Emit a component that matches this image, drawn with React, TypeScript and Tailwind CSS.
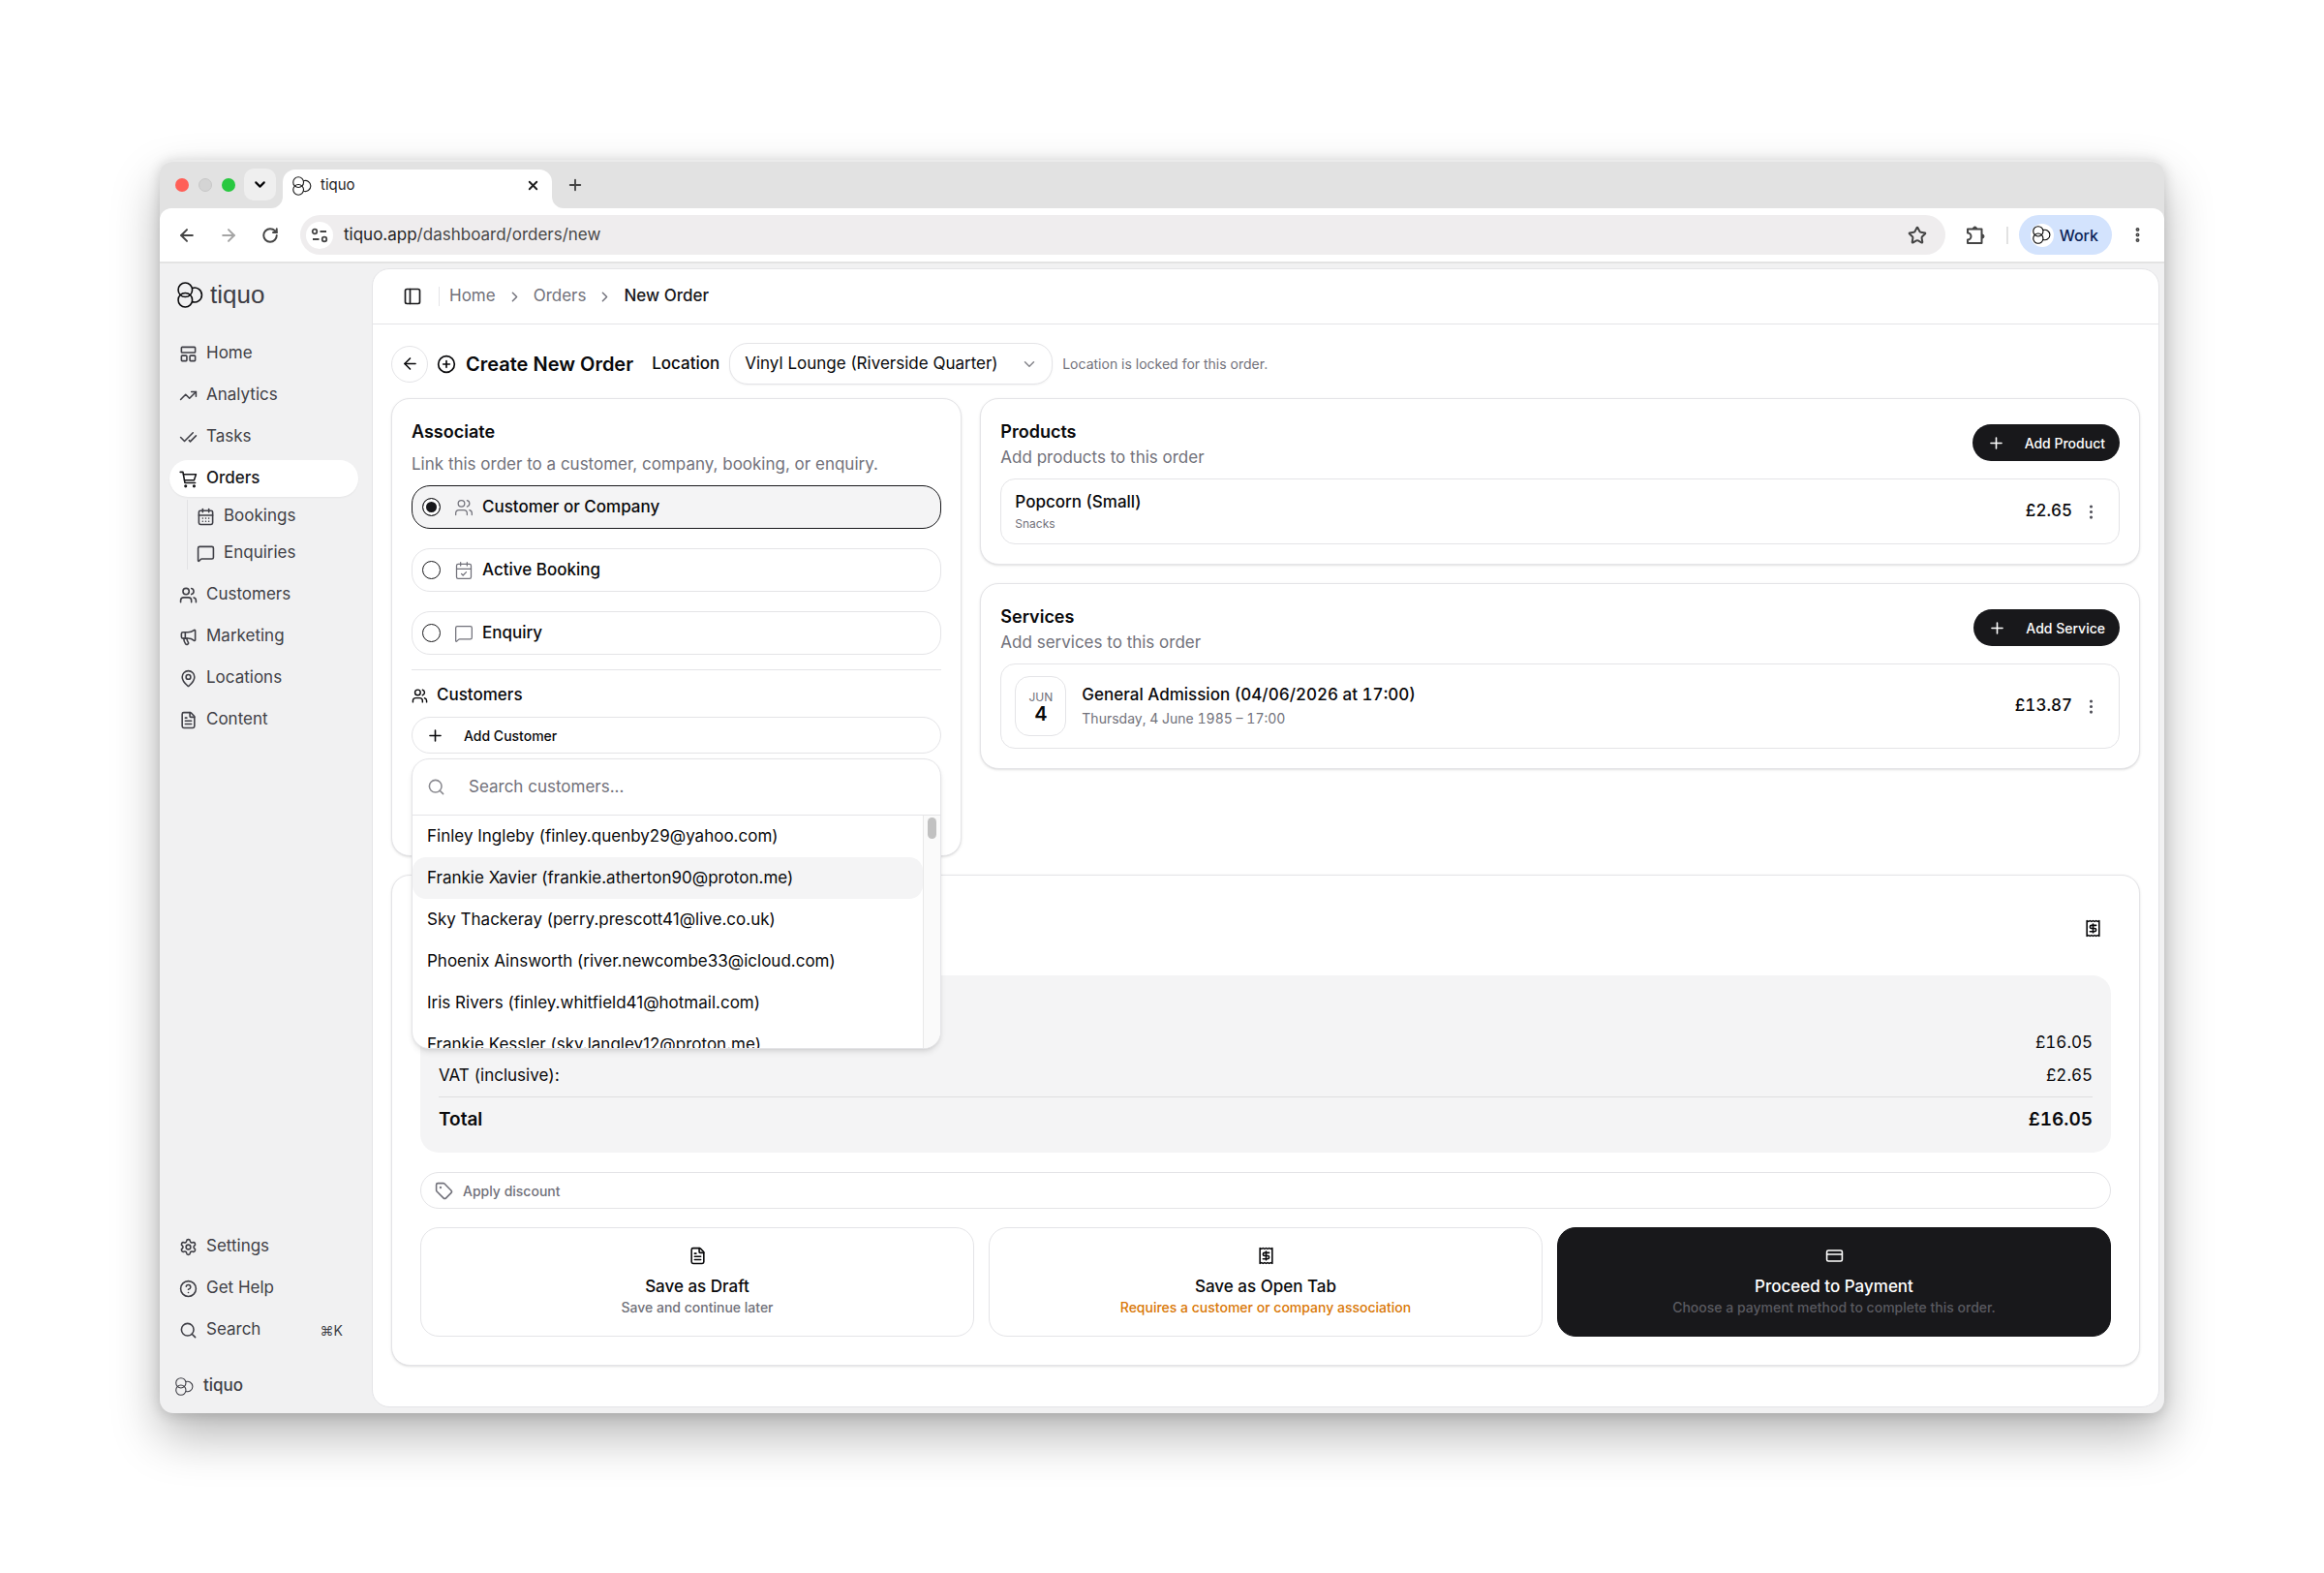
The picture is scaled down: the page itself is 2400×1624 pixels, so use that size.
import type { ComponentType, ReactNode } from "react";
import {
  ArrowLeft,
  ArrowRight,
  CalendarCheck,
  CalendarDays,
  CheckCheck,
  ChevronDown,
  ChevronRight,
  CircleHelp,
  CirclePlus,
  CreditCard,
  EllipsisVertical,
  FileText,
  LayoutPanelTop,
  MapPin,
  Megaphone,
  MessageSquare,
  PanelLeft,
  Plus,
  Receipt,
  RotateCw,
  Search,
  Settings,
  Star,
  Tag,
  TrendingUp,
  Users,
  X,
  type LucideIcon,
} from "lucide-react";

type NavIcon = ComponentType<{ size?: number }>;

const MAIN_NAV: { label: string; icon: NavIcon }[] = [
  { label: "Home", icon: LayoutPanelTop },
  { label: "Analytics", icon: TrendingUp },
  { label: "Tasks", icon: CheckCheck },
];

const SECOND_NAV: { label: string; icon: NavIcon }[] = [
  { label: "Customers", icon: Users },
  { label: "Marketing", icon: Megaphone },
  { label: "Locations", icon: MapPin },
  { label: "Content", icon: FileText },
];

const ASSOCIATIONS: { label: string; icon: LucideIcon }[] = [
  { label: "Customer or Company", icon: Users },
  { label: "Active Booking", icon: CalendarCheck },
  { label: "Enquiry", icon: MessageSquare },
];

const CUSTOMERS = [
  "Finley Ingleby (finley.quenby29@yahoo.com)",
  "Frankie Xavier (frankie.atherton90@proton.me)",
  "Sky Thackeray (perry.prescott41@live.co.uk)",
  "Phoenix Ainsworth (river.newcombe33@icloud.com)",
  "Iris Rivers (finley.whitfield41@hotmail.com)",
  "Frankie Kessler (sky.langley12@proton.me)",
];

function TiquoMark({ size = 26 }: { size?: number }) {
  return (
    <svg width={size} height={size} viewBox="0 0 26 26" fill="none" stroke="currentColor" strokeWidth="1.5" className="shrink-0">
      <circle cx="8" cy="8" r="7" />
      <circle cx="8" cy="18" r="7" />
      <path d="M14.780 6.260A7.200 7.200 0 1 1 14.780 19.740" />
    </svg>
  );
}

function CartIcon({ size = 19 }: { size?: number }) {
  return (
    <svg width={size} height={size} viewBox="0 0 24 24" fill="none" stroke="currentColor" strokeWidth="2" strokeLinecap="round" strokeLinejoin="round">
      <path d="M1.500 3H5l2.500 14h13.500" />
      <path d="M5.700 6H22l-2.500 7.500H7" />
      <circle cx="8.500" cy="21.300" r="1" />
      <circle cx="19.500" cy="21.300" r="1" />
    </svg>
  );
}

function Puzzle() {
  return (
    <svg width="22" height="22" viewBox="0 0 22 22" fill="none" stroke="currentColor" strokeWidth="2">
      <path d="M3 4.500h14.500V19H3v-3.500a3.400 3.400 0 0 0 0-7z" strokeLinejoin="round" />
      <path d="M8.500 4a2 2 0 0 1 4 0zM18 10a2 2 0 0 1 0 4z" fill="currentColor" strokeWidth="1" />
    </svg>
  );
}

function SiteControls() {
  return (
    <svg width="18" height="16" viewBox="0 0 18 16" fill="none" stroke="currentColor" strokeWidth="1.8">
      <circle cx="4" cy="4" r="2.300" />
      <path d="M9.500 4H16M2 12h6.500" />
      <circle cx="14" cy="12" r="2.300" />
    </svg>
  );
}

function TabStrip() {
  return (
    <div className="flex h-[48px] items-end bg-[#e2e2e2] pl-[16px]">
      <div className="flex h-[48px] items-center gap-[10px]">
        <span className="size-[14px] rounded-full bg-[#ff5f57]" />
        <span className="size-[14px] rounded-full border border-[#c8c8c8] bg-[#d4d4d4]" />
        <span className="size-[14px] rounded-full bg-[#28c840]" />
      </div>
      <button type="button" aria-label="Search tabs" className="mb-[8px] ml-[9px] flex size-[33px] items-center justify-center rounded-[10px] bg-[#efefef]">
        <ChevronDown size={17} strokeWidth={3} />
      </button>
      <div className="relative ml-[7px] flex h-[40px] w-[278px] items-center rounded-t-[13px] bg-white pr-[12px] pb-[7px] pl-[10px] text-[15px] text-[#1f1f1f]">
        <TiquoMark size={20} />
        <span className="ml-[9px] flex-1">tiquo</span>
        <button type="button" aria-label="Close tab">
          <X size={15} strokeWidth={3} />
        </button>
        <svg width="12" height="12" className="absolute bottom-0 -left-[12px]" fill="white">
          <path d="M12 0v12H0A12 12 0 0 0 12 0z" />
        </svg>
        <svg width="12" height="12" className="absolute -right-[12px] bottom-0" fill="white">
          <path d="M0 0v12h12A12 12 0 0 1 0 0z" />
        </svg>
      </div>
      <button type="button" aria-label="New tab" className="mb-[15px] ml-[15px] text-[#454545]">
        <Plus size={18} strokeWidth={2.5} />
      </button>
    </div>
  );
}

function Toolbar() {
  return (
    <div className="bg-[#e2e2e2]">
      <div className="flex h-[57px] items-center rounded-t-[12px] border-b-2 border-[#e3e3e3] bg-white px-[18px] text-[#454545]">
        <button type="button" aria-label="Back">
          <ArrowLeft size={20} strokeWidth={2.4} />
        </button>
        <button type="button" aria-label="Forward" className="ml-[23px] text-[#a5a5a5]">
          <ArrowRight size={20} strokeWidth={2.4} />
        </button>
        <button type="button" aria-label="Reload" className="ml-[24px]">
          <RotateCw size={18} strokeWidth={2.6} />
        </button>
        <div className="ml-[22px] flex h-[41px] flex-1 items-center rounded-full bg-[#efedee] pr-[19px] pl-[6px]">
          <span className="flex size-[28px] items-center justify-center rounded-full bg-white">
            <SiteControls />
          </span>
          <p className="ml-[11px] flex-1 text-[17px] text-[#474747]">
            <span className="text-[#1f1f1f]">tiquo.app</span>/dashboard/orders/new
          </p>
          <Star size={20} strokeWidth={2.4} />
        </div>
        <div className="ml-[20px] flex items-center">
          <Puzzle />
          <span className="ml-[21px] h-[18px] w-[2px] bg-[#e2e2e2]" />
          <button type="button" className="ml-[11px] flex h-[41px] items-center gap-[6px] rounded-full bg-[#d3e3fd] pr-[14px] pl-[12px] text-[16px] font-medium text-[#0b1f57]">
            <span className="flex size-[24px] items-center justify-center rounded-full bg-white text-black">
              <TiquoMark size={19} />
            </span>
            Work
          </button>
          <button type="button" aria-label="Menu" className="ml-[17px]">
            <EllipsisVertical size={19} strokeWidth={3} />
          </button>
        </div>
      </div>
    </div>
  );
}

function NavItem({ label, icon: Icon, active, hint }: { label: string; icon: NavIcon; active?: boolean; hint?: string }) {
  return (
    <a
      href="#"
      className={`flex h-[38px] items-center gap-[9px] rounded-full px-[10px] ${
        active ? "bg-white font-medium text-[#18181b] shadow-xs" : "text-[#3f3f46]"
      }`}
    >
      <Icon size={19} />
      {label}
      {hint && <kbd className="mr-[6px] ml-auto font-[Inter,sans-serif] text-[14px]">{hint}</kbd>}
    </a>
  );
}

function SubItem({ label, icon: Icon }: { label: string; icon: NavIcon }) {
  return (
    <a href="#" className="flex h-[34px] items-center gap-[9px] pl-[9px] text-[#3f3f46]">
      <Icon size={19} />
      {label}
    </a>
  );
}

function Sidebar() {
  return (
    <aside className="flex w-[219px] shrink-0 flex-col pr-[14px] pb-[11px] pl-[10px] text-[17px]">
      <div className="flex h-[64px] items-center gap-[7px] pl-[8px]">
        <TiquoMark size={27} />
        <span className="font-['Liberation_Sans',sans-serif] text-[26px] text-[#3f3f46]">tiquo</span>
      </div>
      <nav className="mt-[10px] flex flex-col gap-[5px]">
        {MAIN_NAV.map((n) => (
          <NavItem key={n.label} {...n} />
        ))}
        <NavItem label="Orders" icon={CartIcon} active />
        <div className="-mt-[2px] mb-[2px] ml-[18px] flex flex-col gap-[4px] border-l border-[#e2e2e4]">
          <SubItem label="Bookings" icon={CalendarDays} />
          <SubItem label="Enquiries" icon={MessageSquare} />
        </div>
        {SECOND_NAV.map((n) => (
          <NavItem key={n.label} {...n} />
        ))}
      </nav>
      <div className="mt-auto flex flex-col gap-[5px]">
        <NavItem label="Settings" icon={Settings} />
        <NavItem label="Get Help" icon={CircleHelp} />
        <NavItem label="Search" icon={Search} hint="⌘K" />
      </div>
      <a href="#" className="mt-[22px] flex h-[34px] items-center gap-[10px] pl-[6px] font-medium text-[#3f3f46]">
        <TiquoMark size={19} />
        tiquo
      </a>
    </aside>
  );
}

function Card({ title, description, action, className = "", children }: { title: string; description: string; action?: ReactNode; className?: string; children: ReactNode }) {
  return (
    <section className={`rounded-[19px] border border-[#e4e4e7] bg-white px-[20px] pt-[21px] shadow-sm ${className}`}>
      <div className="flex items-start justify-between">
        <div>
          <h2 className="text-[18px] leading-[26px] font-semibold">{title}</h2>
          <p className="text-[17px] leading-[27px] text-[#71717a]">{description}</p>
        </div>
        {action}
      </div>
      {children}
    </section>
  );
}

function AddButton({ label }: { label: string }) {
  return (
    <button type="button" className="mt-[5px] flex h-[38px] items-center gap-[20px] rounded-full bg-[#18181b] pr-[15px] pl-[15px] text-[14px] font-medium text-white">
      <Plus size={19} />
      {label}
    </button>
  );
}

function RowPrice({ price, item }: { price: string; item: string }) {
  return (
    <div className="ml-auto flex items-center gap-[10px] pr-[19px]">
      <span className="text-[17px] font-medium tabular-nums">{price}</span>
      <button type="button" aria-label={`Options for ${item}`} className="text-[#52525b]">
        <EllipsisVertical size={19} />
      </button>
    </div>
  );
}

function CustomerPicker() {
  return (
    <div className="absolute top-full right-0 left-0 z-10 mt-[5px] overflow-hidden rounded-[18px] border border-[#e4e4e7] bg-white shadow-md">
      <label className="flex h-[58px] items-center gap-[24px] border-b border-[#e4e4e7] pl-[15px]">
        <Search size={19} className="text-[#8a8a90]" />
        <input type="text" aria-label="Search customers" placeholder="Search customers..." className="flex-1 text-[17px] outline-none placeholder:text-[#71717a]" />
      </label>
      <div className="flex h-[240px]">
        <ul className="flex-1 overflow-hidden">
          {CUSTOMERS.map((c, i) => (
            <li key={c}>
              <button type="button" className={`flex h-[43px] w-full items-center rounded-[14px] px-[15px] text-[17px] ${i === 1 ? "bg-[#f4f4f5]" : ""}`}>
                {c}
              </button>
            </li>
          ))}
        </ul>
        <div className="flex w-[18px] justify-center border-l border-[#e8e8e8] bg-[#fafafa] pt-[2px]">
          <span className="h-[22px] w-[9px] rounded-full bg-[#c1c1c1]" />
        </div>
      </div>
    </div>
  );
}

function AssociateCard() {
  return (
    <Card title="Associate" description="Link this order to a customer, company, booking, or enquiry." className="pb-[105px] [&_h2]:mb-[7px]">
      <div className="mt-[8px] flex flex-col gap-[20px]">
        {ASSOCIATIONS.map(({ label, icon: Icon }, i) => (
          <label
            key={label}
            className={`flex h-[45px] items-center rounded-[19px] border pl-[10px] text-[17px] font-medium ${
              i === 0 ? "border-[#18181b] bg-[#f4f4f5]" : "border-[#e4e4e7]"
            }`}
          >
            <input
              type="radio"
              name="association"
              defaultChecked={i === 0}
              className="size-[19px] appearance-none rounded-full border border-[#18181b] bg-white checked:border-[#18181b] checked:bg-[#18181b] checked:shadow-[inset_0_0_0_3px_white]"
            />
            <Icon size={20} strokeWidth={1.5} className="mr-[9px] ml-[14px] text-[#71717a]" />
            {label}
          </label>
        ))}
      </div>
      <hr className="mt-[15px] border-[#e4e4e7]" />
      <h3 className="mt-[14px] flex h-[24px] items-center gap-[9px] text-[17px] font-medium">
        <Users size={17} />
        Customers
      </h3>
      <div className="relative mt-[10px]">
        <button type="button" className="flex h-[38px] w-full items-center gap-[20px] rounded-full border border-[#e4e4e7] pl-[14px] text-[14px] font-medium">
          <Plus size={19} />
          Add Customer
        </button>
        <CustomerPicker />
      </div>
    </Card>
  );
}

function ActionTile({ icon, title, note, className, noteClass }: { icon: ReactNode; title: string; note: string; className: string; noteClass: string }) {
  return (
    <button type="button" className={`flex h-[113px] flex-1 flex-col items-center rounded-[19px] border pt-[19px] ${className}`}>
      {icon}
      <span className="mt-[10px] text-[17px] leading-[24px] font-medium">{title}</span>
      <span className={`text-[14px] leading-[19px] font-medium ${noteClass}`}>{note}</span>
    </button>
  );
}

function SummaryCard() {
  return (
    <section className="mt-[19px] rounded-[19px] border border-[#e4e4e7] bg-white px-[29px] pb-[29px] shadow-sm">
      <div className="flex h-[103px] items-center justify-end pt-[6px] pr-[9px]">
        <Receipt size={19} />
      </div>
      <div className="rounded-[19px] bg-[#f4f4f5] px-[19px] pt-[53px] pb-[20px] text-[17px] tabular-nums">
        <p className="flex h-[34px] items-center justify-end">£16.05</p>
        <p className="flex h-[34px] items-center justify-between">
          <span>VAT (inclusive):</span>
          <span>£2.65</span>
        </p>
        <p className="mt-[4px] flex h-[38px] items-center justify-between border-t border-[#dedee0] pt-[10px] text-[19px] font-semibold">
          <span>Total</span>
          <span>£16.05</span>
        </p>
      </div>
      <button type="button" className="mt-[20px] flex h-[38px] w-full items-center gap-[10px] rounded-full border border-[#e4e4e7] pl-[14px] text-[14px] font-medium text-[#71717a]">
        <Tag size={19} />
        Apply discount
      </button>
      <div className="mt-[19px] flex gap-[15px]">
        <ActionTile icon={<FileText size={19} />} title="Save as Draft" note="Save and continue later" className="border-[#e4e4e7]" noteClass="text-[#71717a]" />
        <ActionTile icon={<Receipt size={19} />} title="Save as Open Tab" note="Requires a customer or company association" className="border-[#e4e4e7]" noteClass="text-[#d97706]" />
        <ActionTile icon={<CreditCard size={19} />} title="Proceed to Payment" note="Choose a payment method to complete this order." className="border-[#18181b] bg-[#18181b] text-white" noteClass="text-[#5a5a60]" />
      </div>
    </section>
  );
}

function PageHeader() {
  return (
    <header className="flex h-[57px] items-center border-b border-[#e4e4e7] pl-[31px] text-[17px] text-[#71717a]">
      <button type="button" aria-label="Toggle sidebar" className="text-[#18181b]">
        <PanelLeft size={20} />
      </button>
      <span className="mr-[10px] ml-[17px] h-[20px] w-px bg-[#e4e4e7]" />
      <nav className="flex items-center gap-[11px]">
        <a href="#">Home</a>
        <ChevronRight size={17} />
        <a href="#">Orders</a>
        <ChevronRight size={17} />
        <span className="font-medium text-[#18181b]">New Order</span>
      </nav>
    </header>
  );
}

export default function App() {
  return (
    <div className="flex min-h-screen bg-white p-[165px] font-[Inter,sans-serif] text-[#09090b] antialiased">
      <div className="flex min-w-0 flex-1 flex-col overflow-hidden rounded-[14px] border-t-2 border-[#ebebeb] bg-[#f1f1f2] shadow-[0_24px_50px_rgba(0,0,0,0.28),0_2px_14px_rgba(0,0,0,0.16)]">
        <TabStrip />
        <Toolbar />
        <div className="flex flex-1">
          <Sidebar />
          <main className="mt-[5px] mr-[5px] mb-[6px] min-w-0 flex-1 rounded-[18px] border border-[#e4e4e7] bg-white">
            <PageHeader />
            <div className="px-[19px] pt-[19px]">
              <div className="flex items-center">
                <button type="button" aria-label="Go back" className="flex size-[38px] items-center justify-center rounded-full border border-[#e4e4e7]">
                  <ArrowLeft size={19} />
                </button>
                <CirclePlus size={20} className="mr-[10px] ml-[9px]" />
                <h1 className="text-[20px] font-semibold">Create New Order</h1>
                <label htmlFor="location" className="ml-[19px] text-[17px] font-medium">
                  Location
                </label>
                <div className="relative ml-[10px]">
                  <select id="location" className="h-[43px] w-[334px] appearance-none rounded-[19px] border border-[#e4e4e7] bg-white pl-[15px] text-[17px] shadow-xs">
                    <option>Vinyl Lounge (Riverside Quarter)</option>
                  </select>
                  <ChevronDown size={18} className="pointer-events-none absolute top-[13px] right-[15px] text-[#85858b]" />
                </div>
                <p className="ml-[10px] text-[14px] text-[#71717a]">Location is locked for this order.</p>
              </div>

              <div className="mt-[14px] grid grid-cols-3 items-start gap-[19px]">
                <AssociateCard />
                <div className="col-span-2 flex flex-col gap-[19px]">
                  <Card title="Products" description="Add products to this order" action={<AddButton label="Add Product" />} className="pb-[20px]">
                    <div className="mt-[8px] flex items-center rounded-[15px] border border-[#e4e4e7] py-[11px] pl-[14px]">
                      <div>
                        <p className="text-[17px] leading-[25px] font-medium">Popcorn (Small)</p>
                        <p className="text-[12px] leading-[19px] text-[#71717a]">Snacks</p>
                      </div>
                      <RowPrice price="£2.65" item="Popcorn (Small)" />
                    </div>
                  </Card>
                  <Card title="Services" description="Add services to this order" action={<AddButton label="Add Service" />} className="pb-[20px]">
                    <div className="mt-[8px] flex items-center rounded-[15px] border border-[#e4e4e7] py-[12px] pl-[14px]">
                      <div className="flex h-[62px] w-[53px] flex-col items-center justify-center rounded-[15px] border border-[#e4e4e7]">
                        <span className="text-[12px] leading-[15px] text-[#71717a]">JUN</span>
                        <span className="text-[20px] leading-[20px] font-semibold">4</span>
                      </div>
                      <div className="ml-[16px] tabular-nums">
                        <p className="text-[17px] leading-[25px] font-medium">General Admission (04/06/2026 at 17:00)</p>
                        <p className="text-[14px] leading-[23px] text-[#71717a]">Thursday, 4 June 1985 – 17:00</p>
                      </div>
                      <RowPrice price="£13.87" item="General Admission" />
                    </div>
                  </Card>
                </div>
              </div>
              <SummaryCard />
            </div>
          </main>
        </div>
      </div>
    </div>
  );
}
